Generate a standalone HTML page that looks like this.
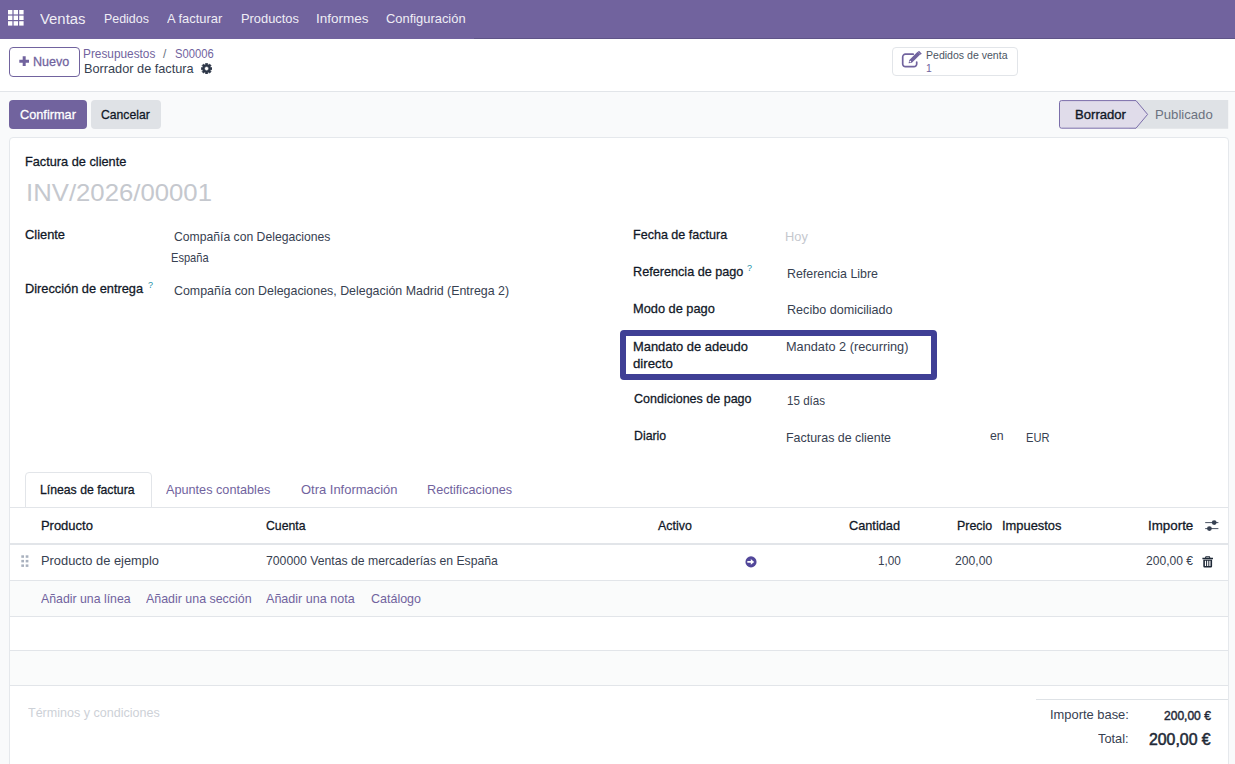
<!DOCTYPE html>
<html lang="es">
<head>
<meta charset="utf-8">
<title>Odoo - Borrador de factura</title>
<style>
*{box-sizing:border-box;margin:0;padding:0}
html,body{width:1235px;height:764px;overflow:hidden;background:#f9fafb;}
body{font-family:"Liberation Sans",sans-serif;font-size:13px;color:#374151;position:relative;}
.abs{position:absolute;white-space:nowrap;line-height:1;transform-origin:0 0;}
/* navbar */
#nav{position:absolute;left:0;top:0;width:1235px;height:39px;background:#71639e;}
#nav .abs{color:#efedf5;}
/* control panel */
#cp{position:absolute;left:0;top:39px;width:1235px;height:53px;background:#fff;border-bottom:1px solid #e2e5e9;}
#statusrow{position:absolute;left:0;top:92px;width:1235px;height:45px;background:#f9fafb;}
.btn{position:absolute;border-radius:4px;height:29px;top:100px;text-align:center;line-height:29px;font-weight:500;white-space:nowrap;}
#sheet{position:absolute;left:9px;top:137px;width:1220px;height:640px;background:#fff;border:1px solid #e5e8ec;border-radius:4px 4px 0 0;}
.med{-webkit-text-stroke:0.28px currentColor;}
.lbl{color:#111827;-webkit-text-stroke:0.28px #111827;}
.val{color:#374151;}
.link{color:#71639e;}
.th{color:#111827;-webkit-text-stroke:0.28px #111827;}
</style>
</head>
<body>
<div id="nav">
  <svg style="position:absolute;left:8px;top:10px" width="16" height="16" viewBox="0 0 16 16"><g fill="#fff"><rect x="0" y="0" width="4.4" height="4.4"/><rect x="5.6" y="0" width="4.4" height="4.4"/><rect x="11.2" y="0" width="4.4" height="4.4"/><rect x="0" y="5.6" width="4.4" height="4.4"/><rect x="5.6" y="5.6" width="4.4" height="4.4"/><rect x="11.2" y="5.6" width="4.4" height="4.4"/><rect x="0" y="11.2" width="4.4" height="4.4"/><rect x="5.6" y="11.2" width="4.4" height="4.4"/><rect x="11.2" y="11.2" width="4.4" height="4.4"/></g></svg>
  <div style="position:absolute;left:474px;top:38px;width:761px;height:1px;background:#5f5488;"></div>
  <div class="abs" id="n0" style="left:40.2px;top:12px;font-size:14px;transform:scaleX(1.062);">Ventas</div>
  <div class="abs" id="n1" style="left:103.7px;top:12px;transform:scaleX(0.956);">Pedidos</div>
  <div class="abs" id="n2" style="left:167.4px;top:12px;transform:scaleX(0.992);">A facturar</div>
  <div class="abs" id="n3" style="left:240.5px;top:12px;transform:scaleX(0.990);">Productos</div>
  <div class="abs" id="n4" style="left:315.6px;top:12px;transform:scaleX(1.036);">Informes</div>
  <div class="abs" id="n5" style="left:385.8px;top:12px;transform:scaleX(0.992);">Configuración</div>
</div>
<div id="cp">
  <div id="bnuevo" style="position:absolute;left:8.6px;top:8px;width:71px;height:30px;border:1px solid #71639e;border-radius:4px;background:#fff;"></div>
  <div class="abs link med" id="tnuevo2" style="left:32.9px;top:16px;transform:scaleX(0.966);">Nuevo</div>
  <div class="abs link" id="bc1" style="left:83.1px;top:9px;font-size:12px;transform:scaleX(0.986);">Presupuestos</div>
  <div class="abs" id="bc2" style="left:163px;top:9px;font-size:12px;color:#6b7280;">/</div>
  <div class="abs link" id="bc3" style="left:175.0px;top:9px;font-size:12px;transform:scaleX(0.935);">S00006</div>
  <div class="abs" id="bc4" style="left:83.8px;top:23px;font-size:13px;color:#374151;transform:scaleX(0.979);">Borrador de factura</div>
  <div id="bped" style="position:absolute;left:892px;top:8px;width:126.3px;height:28.8px;border:1px solid #e2e5e9;border-radius:4px;background:#fff;"></div>
  <div class="abs" id="ped1" style="left:926.2px;top:12px;font-size:10.4px;color:#4b5563;transform:scaleX(1.015);">Pedidos de venta</div>
  <div class="abs link" id="ped2" style="left:926px;top:25px;font-size:10.4px;">1</div>
</div>
<div id="statusrow"></div>
<div class="btn" id="bconf" style="left:8.7px;width:78.8px;background:#71639e;"></div>
<div class="btn" id="bcanc" style="left:91.1px;width:69.5px;background:#dfe2e6;"></div>
<div class="abs med" id="bconf_t" style="left:19.6px;top:108px;color:#fff;transform:scaleX(0.979);">Confirmar</div>
<div class="abs med" id="bcanc_t" style="left:101.2px;top:108px;color:#111827;transform:scaleX(0.937);">Cancelar</div>
<div id="sheet"></div>
<!-- status bar -->
<svg id="status" style="position:absolute;left:1059px;top:100px" width="170" height="29" viewBox="0 0 170 29">
  <path d="M70 0H169.2V28.8H70Z" fill="#dfe2e6"/>
  <path d="M2.5 0.6H77L88.6 14.4L77 28.2H2.5a2 2 0 0 1-2-2V2.6a2 2 0 0 1 2-2Z" fill="#e0dcea" stroke="#7b6eaa" stroke-width="1"/>
</svg>
<div class="abs" id="st1" style="left:1075.0px;top:108px;color:#111827;-webkit-text-stroke:0.35px #111827;transform:scaleX(1.008);">Borrador</div>
<div class="abs" id="st2" style="left:1155.0px;top:108px;color:#6b7280;transform:scaleX(1.011);">Publicado</div>

<div class="abs lbl" id="t_fc" style="left:24.5px;top:155px;transform:scaleX(0.980);">Factura de cliente</div>
<div class="abs" id="t_inv" style="left:26.3px;top:181px;font-size:24.5px;color:#c5c8ce;transform:scaleX(1.050);">INV/2026/00001</div>
<div class="abs lbl" id="t_cli" style="left:24.5px;top:228px;transform:scaleX(0.988);">Cliente</div>
<div class="abs val" id="t_cli1" style="left:173.7px;top:230px;transform:scaleX(0.937);">Compañía con Delegaciones</div>
<div class="abs val" id="t_cli2" style="left:170.5px;top:251px;transform:scaleX(0.853);">España</div>
<div class="abs lbl" id="t_dir" style="left:24.5px;top:282px;transform:scaleX(0.984);">Dirección de entrega</div>
<div class="abs" id="t_dirq" style="left:148px;top:281px;font-size:9px;color:#1f8fa8;">?</div>
<div class="abs val" id="t_dir1" style="left:173.7px;top:284px;transform:scaleX(0.954);">Compañía con Delegaciones, Delegación Madrid (Entrega 2)</div>

<div id="hl" style="position:absolute;left:620px;top:330px;width:317px;height:50px;border:6px solid #3f3f95;border-radius:4px;"></div>
<div class="abs lbl" id="r1" style="left:633.3px;top:228px;transform:scaleX(0.965);">Fecha de factura</div>
<div class="abs" id="r1v" style="left:785.1px;top:230px;color:#c5c8ce;transform:scaleX(0.986);">Hoy</div>
<div class="abs lbl" id="r2" style="left:633.3px;top:265px;transform:scaleX(0.973);">Referencia de pago</div>
<div class="abs" id="r2q" style="left:747px;top:264px;font-size:9px;color:#1f8fa8;">?</div>
<div class="abs val" id="r2v" style="left:786.5px;top:267px;transform:scaleX(0.954);">Referencia Libre</div>
<div class="abs lbl" id="r3" style="left:633.3px;top:302px;transform:scaleX(0.984);">Modo de pago</div>
<div class="abs val" id="r3v" style="left:786.5px;top:303px;transform:scaleX(0.968);">Recibo domiciliado</div>
<div class="abs lbl" id="r4" style="left:633.3px;top:340px;transform:scaleX(0.993);">Mandato de adeudo</div>
<div class="abs lbl" id="r4b" style="left:633.3px;top:357px;transform:scaleX(1.020);">directo</div>
<div class="abs val" id="r4v" style="left:786.1px;top:340px;transform:scaleX(0.979);">Mandato 2 (recurring)</div>
<div class="abs lbl" id="r5" style="left:633.6px;top:392px;transform:scaleX(0.962);">Condiciones de pago</div>
<div class="abs val" id="r5v" style="left:787.0px;top:394px;transform:scaleX(0.893);">15 días</div>
<div class="abs lbl" id="r6" style="left:633.6px;top:429px;transform:scaleX(0.947);">Diario</div>
<div class="abs val" id="r6v" style="left:786.0px;top:431px;transform:scaleX(0.956);">Facturas de cliente</div>
<div class="abs val" id="r6e" style="left:990.4px;top:429px;transform:scaleX(0.945);">en</div>
<div class="abs val" id="r6c" style="left:1025.8px;top:431px;transform:scaleX(0.855);">EUR</div>

<!-- tabs -->
<div id="tabline" style="position:absolute;left:10px;top:507px;width:1218px;height:1px;background:#e2e5e9;"></div>
<div id="tabact" style="position:absolute;left:25px;top:472px;width:127px;height:36px;border:1px solid #e2e5e9;border-bottom:1px solid #e2e5e9;border-radius:4px 4px 0 0;background:#fff;"></div>
<div class="abs" id="tb1" style="left:40.4px;top:483px;color:#111827;-webkit-text-stroke:0.3px #111827;transform:scaleX(0.941);">Líneas de factura</div>
<div class="abs link" id="tb2" style="left:165.9px;top:483px;transform:scaleX(0.975);">Apuntes contables</div>
<div class="abs link" id="tb3" style="left:301.2px;top:483px;transform:scaleX(0.996);">Otra Información</div>
<div class="abs link" id="tb4" style="left:427.2px;top:483px;transform:scaleX(0.974);">Rectificaciones</div>

<!-- table -->
<div id="hline" style="position:absolute;left:10px;top:543px;width:1218px;height:2px;background:#e2e5e9;"></div>
<div class="abs th" id="h1" style="left:40.9px;top:519px;transform:scaleX(1.000);">Producto</div>
<div class="abs th" id="h2" style="left:266.0px;top:519px;transform:scaleX(0.941);">Cuenta</div>
<div class="abs th" id="h3" style="left:657.7px;top:519px;transform:scaleX(0.954);">Activo</div>
<div class="abs th" id="h4" style="left:849.2px;top:519px;transform:scaleX(0.980);">Cantidad</div>
<div class="abs th" id="h5" style="left:957.3px;top:519px;transform:scaleX(0.956);">Precio</div>
<div class="abs th" id="h6" style="left:1002.0px;top:519px;transform:scaleX(0.991);">Impuestos</div>
<div class="abs th" id="h7" style="left:1147.9px;top:519px;transform:scaleX(1.027);">Importe</div>

<div id="rline1" style="position:absolute;left:10px;top:580px;width:1218px;height:1px;background:#e2e5e9;"></div>
<div id="row2" style="position:absolute;left:10px;top:581px;width:1218px;height:35px;background:#fafbfb;"></div>
<div id="rline2" style="position:absolute;left:10px;top:616px;width:1218px;height:1px;background:#e2e5e9;"></div>
<div id="rline3" style="position:absolute;left:10px;top:650px;width:1218px;height:1px;background:#e2e5e9;"></div>
<div id="row4" style="position:absolute;left:10px;top:651px;width:1218px;height:34px;background:#fafbfb;"></div>
<div id="rline4" style="position:absolute;left:10px;top:685px;width:1218px;height:1px;background:#e2e5e9;"></div>

<div class="abs val" id="c1" style="left:40.9px;top:554px;transform:scaleX(0.989);">Producto de ejemplo</div>
<div class="abs val" id="c2" style="left:266.0px;top:554px;transform:scaleX(0.941);">700000 Ventas de mercaderías en España</div>
<div class="abs val" id="c4" style="left:878.0px;top:554px;transform:scaleX(0.902);">1,00</div>
<div class="abs val" id="c5" style="left:955.3px;top:554px;transform:scaleX(0.936);">200,00</div>
<div class="abs val" id="c7" style="left:1145.9px;top:554px;transform:scaleX(0.929);">200,00 €</div>

<div class="abs link" id="a1" style="left:40.9px;top:592px;transform:scaleX(0.946);">Añadir una línea</div>
<div class="abs link" id="a2" style="left:146.0px;top:592px;transform:scaleX(0.955);">Añadir una sección</div>
<div class="abs link" id="a3" style="left:265.5px;top:592px;transform:scaleX(0.966);">Añadir una nota</div>
<div class="abs link" id="a4" style="left:370.7px;top:592px;transform:scaleX(0.961);">Catálogo</div>

<div class="abs" id="terms" style="left:27.5px;top:706px;color:#cdd1d7;transform:scaleX(0.964);">Términos y condiciones</div>
<div id="totline" style="position:absolute;left:1036px;top:699px;width:192px;height:1px;background:#dee2e6;"></div>
<div class="abs val" id="tt1" style="left:1050.4px;top:708px;transform:scaleX(0.992);">Importe base:</div>
<div class="abs" id="tt1v" style="left:1163.7px;top:710px;color:#1f2937;-webkit-text-stroke:0.45px #1f2937;font-size:12.5px;transform:scaleX(0.963);">200,00 €</div>
<div class="abs val" id="tt2" style="left:1098.0px;top:732px;transform:scaleX(0.984);">Total:</div>
<div class="abs" id="tt2v" style="left:1149.0px;top:731px;color:#1f2937;-webkit-text-stroke:0.55px #1f2937;font-size:17px;transform:scaleX(0.932);">200,00 €</div>

<!-- icons -->
<svg id="i_plus" style="position:absolute;left:18.8px;top:56px" width="10.4" height="10.4" viewBox="0 0 10.4 10.4"><path d="M3.7 0.3h3v3.4h3.4v3H6.7v3.4h-3V6.7H0.3v-3h3.4Z" fill="#71639e"/></svg>
<svg id="i_gear" style="position:absolute;left:200.9px;top:62.8px" width="11.2" height="11.2" viewBox="0 0 12 12"><path fill-rule="evenodd" fill="#2d3748" stroke="#2d3748" stroke-width="0.5" stroke-linejoin="round" d="M4.79 1.56 L4.85 0.21 L7.15 0.21 L7.21 1.56 L8.28 2.00 L9.28 1.09 L10.91 2.72 L10.00 3.72 L10.44 4.79 L11.79 4.85 L11.79 7.15 L10.44 7.21 L10.00 8.28 L10.91 9.28 L9.28 10.91 L8.28 10.00 L7.21 10.44 L7.15 11.79 L4.85 11.79 L4.79 10.44 L3.72 10.00 L2.72 10.91 L1.09 9.28 L2.00 8.28 L1.56 7.21 L0.21 7.15 L0.21 4.85 L1.56 4.79 L2.00 3.72 L1.09 2.72 L2.72 1.09 L3.72 2.00Z M3.80 6.00 a2.20 2.20 0 1 0 4.40 0 a2.20 2.20 0 1 0 -4.40 0Z"/></svg>
<svg id="i_edit" style="position:absolute;left:900.6px;top:51px" width="22" height="17" viewBox="0 0 22 17"><path d="M12.2 3.2H4.4a2.7 2.7 0 0 0-2.7 2.7v7a2.7 2.7 0 0 0 2.7 2.7h8.6a2.7 2.7 0 0 0 2.7-2.7V11" fill="none" stroke="#71639e" stroke-width="1.7" stroke-linecap="round"/><path d="M7.6 12.3l0.7-3.2 8.3-8.3 2.6 2.6-8.3 8.3Z" fill="#71639e"/><path d="M17.3 0.2l1-0.1 2 2.1-0.1 1-0.6 0.5-2.8-2.8Z" fill="#71639e"/><circle cx="9.3" cy="10.6" r="0.8" fill="#fff"/></svg>
<svg id="i_drag" style="position:absolute;left:21px;top:555px" width="9" height="13" viewBox="0 0 9 13"><g fill="#a9b1be"><rect x="0.3" y="0.3" width="2.7" height="2.5"/><rect x="4.7" y="0.3" width="2.7" height="2.5"/><rect x="0.3" y="4.9" width="2.7" height="2.5"/><rect x="4.7" y="4.9" width="2.7" height="2.5"/><rect x="0.3" y="9.4" width="2.7" height="2.5"/><rect x="4.7" y="9.4" width="2.7" height="2.5"/></g></svg>
<svg id="i_arrow" style="position:absolute;left:744.6px;top:555.8px" width="12" height="12" viewBox="0 0 12 12"><circle cx="6" cy="5.9" r="5.55" fill="#52479a"/><path d="M2.3 5.1h3.5V3l3.4 2.9-3.4 2.9V6.7H2.3Z" fill="#fff"/></svg>
<svg id="i_adj" style="position:absolute;left:1205px;top:519px" width="14" height="14" viewBox="0 0 14 14"><g stroke="#374151" stroke-width="0.9" fill="#374151"><path d="M0.2 3.6H13.4M0.2 9.6H13.4" fill="none"/><circle cx="9.2" cy="3.6" r="2.4" stroke="none"/><circle cx="4.4" cy="9.6" r="2.4" stroke="none"/></g></svg>
<svg id="i_trash" style="position:absolute;left:1202px;top:555.6px" width="11.4" height="12" viewBox="0 0 11.4 12"><path fill="#1f2937" fill-rule="evenodd" d="M3.6 0.3h4.2l0.6 1.5h2.6v1.5H0.4V1.8H3ZM4.3 1.2l-0.2 0.6h3.2l-0.2-0.6ZM1.3 3.7h8.8v6.6a1.2 1.2 0 0 1-1.2 1.2H2.5a1.2 1.2 0 0 1-1.2-1.2ZM2.9 4.7v5.4h1.2V4.7ZM5.1 4.7v5.4h1.2V4.7ZM7.3 4.7v5.4h1.2V4.7Z"/></svg>
</body>
</html>
